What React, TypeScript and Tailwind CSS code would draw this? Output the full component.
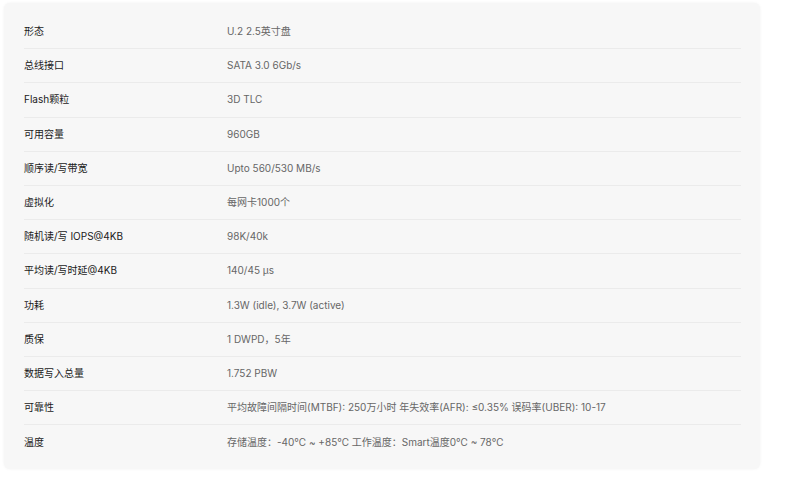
const specs: [string, string][] = [
  ['形态', 'U.2 2.5英寸盘'],
  ['总线接口', 'SATA 3.0 6Gb/s'],
  ['Flash颗粒', '3D TLC'],
  ['可用容量', '960GB'],
  ['顺序读/写带宽', 'Upto 560/530 MB/s'],
  ['虚拟化', '每网卡1000个'],
  ['随机读/写 IOPS@4KB', '98K/40k'],
  ['平均读/写时延@4KB', '140/45 μs'],
  ['功耗', '1.3W (idle), 3.7W (active)'],
  ['质保', '1 DWPD，5年'],
  ['数据写入总量', '1.752 PBW'],
  ['可靠性', '平均故障间隔时间(MTBF): 250万小时 年失效率(AFR): ≤0.35% 误码率(UBER): 10-17'],
  ['温度', '存储温度：-40℃ ~ +85℃ 工作温度：Smart温度0℃ ~ 78℃'],
]

export default function App() {
  return (
    <div
      className="h-[489px] w-[799px] bg-white pl-[4px] pt-[3px]"
      style={{ fontFamily: 'Inter, "Noto Sans CJK SC", sans-serif' }}
    >
      <div className="w-[756px] rounded-[6px] bg-[#f7f7f7] pt-[12px] pb-[10px] pl-[20px] pr-[19px] shadow-[0_0_3px_rgba(0,0,0,0.06)]">
        {specs.map(([label, value], i) => (
          <div
            key={label}
            className={`flex h-[34.2px] items-center text-[10px] ${
              i < specs.length - 1 ? 'border-b border-[#ebebeb]' : ''
            }`}
          >
            <div className="w-[203px] shrink-0 text-[#1a1a1a]">{label}</div>
            <div className="text-[#666]">{value}</div>
          </div>
        ))}
      </div>
    </div>
  )
}
